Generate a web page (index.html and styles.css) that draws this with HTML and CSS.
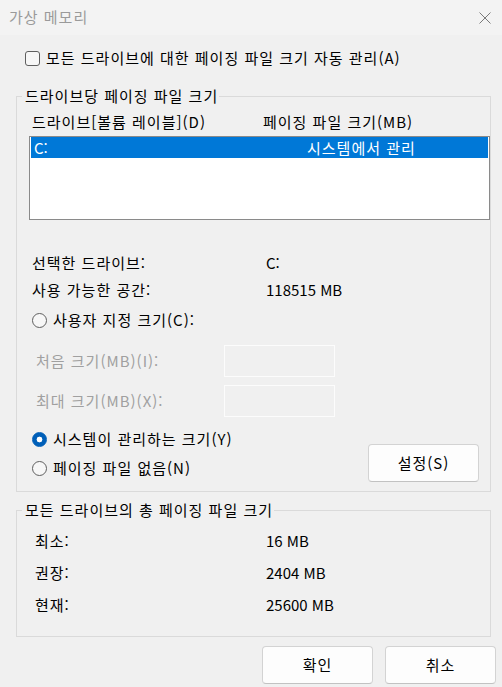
FILE: index.html
```html
<!DOCTYPE html>
<html lang="ko">
<head>
<meta charset="utf-8">
<title>가상 메모리</title>
<link rel="stylesheet" href="styles.css">
</head>
<body>
<div class="window">
  <div class="titlebar">
    <span class="title">가상 메모리</span>
    <svg class="close" width="12" height="12" viewBox="0 0 12 12"><path d="M0.5 0.5 L11.5 11.5 M11.5 0.5 L0.5 11.5" stroke="#7a7a7a" stroke-width="1" fill="none"/></svg>
  </div>
  <div class="content">
    <div class="check-row"><span class="checkbox"></span><span>모든 드라이브에 대한 페이징 파일 크기 자동 관리(A)</span></div>

    <fieldset class="group group-drive">
      <legend>드라이브당 페이징 파일 크기</legend>
      <div class="cols">
        <span class="col-drive">드라이브[볼륨 레이블](D)</span>
        <span class="col-size">페이징 파일 크기(MB)</span>
      </div>
      <div class="listbox">
        <div class="list-row selected">
          <span class="row-drive num">C:</span>
          <span class="row-size">시스템에서 관리</span>
        </div>
      </div>
      <div class="info">
        <div class="info-row"><span class="info-label">선택한 드라이브:</span><span class="num">C:</span></div>
        <div class="info-row"><span class="info-label">사용 가능한 공간:</span><span class="num">118515 MB</span></div>
      </div>
      <div class="radio-row custom"><span class="radio"></span><span>사용자 지정 크기(C):</span></div>
      <div class="field-row first"><span class="field-label">처음 크기(MB)(I):</span><span class="edit"></span></div>
      <div class="field-row"><span class="field-label">최대 크기(MB)(X):</span><span class="edit"></span></div>
      <div class="choice-area">
        <div class="choice-col">
          <div class="radio-row"><span class="radio on"></span><span>시스템이 관리하는 크기(Y)</span></div>
          <div class="radio-row none"><span class="radio"></span><span>페이징 파일 없음(N)</span></div>
        </div>
        <button class="btn set-btn">설정(S)</button>
      </div>
    </fieldset>

    <fieldset class="group group-total">
      <legend>모든 드라이브의 총 페이징 파일 크기</legend>
      <div class="totals">
        <div class="total-row"><span class="total-label">최소:</span><span class="num">16 MB</span></div>
        <div class="total-row"><span class="total-label">권장:</span><span class="num">2404 MB</span></div>
        <div class="total-row"><span class="total-label">현재:</span><span class="num">25600 MB</span></div>
      </div>
    </fieldset>

    <div class="actions">
      <button class="btn">확인</button>
      <button class="btn">취소</button>
    </div>
  </div>
</div>
</body>
</html>
```

FILE: styles.css
```css
* { box-sizing: border-box; }
html, body { margin: 0; padding: 0; }
body {
  width: 502px;
  height: 687px;
  overflow: hidden;
  background: #f0f0f0;
  font-family: "Noto Sans CJK KR", "Malgun Gothic", sans-serif;
  font-size: 15px;
  line-height: 20px;
  letter-spacing: 1px;
  color: #000;
}
.num { letter-spacing: 0; }
.window { width: 502px; height: 687px; }

.titlebar {
  height: 35px;
  background: #f3f3f3;
  display: flex;
  align-items: center;
  justify-content: space-between;
  padding: 0 11px 0 9px;
}
.title { color: #9a9a9a; margin-top: -2px; }
.close { display: block; }

.content { padding: 13px 0 0 16px; }

.check-row {
  display: flex;
  align-items: center;
  gap: 6px;
  height: 20px;
  margin-left: 9px;
}
.checkbox {
  width: 15px;
  height: 15px;
  border: 1px solid #5f5f5f;
  border-radius: 3px;
  background: #f7f7f7;
}

.group {
  margin: 18px 0 0 0;
  width: 475px;
  min-width: 0;
  padding: 0;
  border: 1px solid #dadada;
}
.group legend {
  margin-left: 5px;
  padding: 0 1px 0 3px;
  height: 20px;
  line-height: 20px;
}

.cols {
  display: flex;
  height: 20px;
  margin: 6px 0 0 15px;
}
.col-drive { width: 231px; }

.listbox {
  margin: 4px 0 0 12px;
  width: 461px;
  height: 84px;
  border: 1px solid #8a8a8a;
  background: #fff;
  padding: 0 1px;
}
.list-row {
  display: flex;
  height: 21px;
  line-height: 21px;
  padding-left: 3px;
}
.list-row.selected { background: #0078d7; color: #fff; }
.row-drive { width: 273px; }

.info { margin: 33px 0 0 15px; }
.info-row { display: flex; height: 27px; }
.info-label { width: 234px; }

.radio-row {
  display: flex;
  align-items: center;
  gap: 6px;
  height: 20px;
}
.radio-row.custom { margin: 3px 0 0 15px; }
.radio {
  width: 15px;
  height: 15px;
  border-radius: 50%;
  border: 1px solid #5f5f5f;
  background: #f7f7f7;
}
.radio.on {
  border-color: #005fb8;
  background: radial-gradient(circle, #fff 0 2.6px, #005fb8 3.2px);
}

.field-row {
  display: flex;
  align-items: center;
  margin: 8px 0 0 19px;
  height: 32px;
  color: #a0a0a0;
}
.field-row.first { margin-top: 15px; }
.field-label { width: 188px; }
.edit {
  width: 111px;
  height: 32px;
  border: 1px solid #fcfcfc;
  background: #f0f0f0;
}

.choice-area {
  display: flex;
  justify-content: space-between;
  align-items: flex-end;
  margin: 12px 11px 9px 15px;
}
.choice-col { padding-bottom: 4px; }
.radio-row.none { margin-top: 9px; }

.btn {
  width: 111px;
  height: 38px;
  border: 1px solid #d3d3d3;
  border-bottom-color: #c2c2c2;
  border-radius: 4px;
  background: #fdfdfd;
  font-family: inherit;
  font-size: 15px;
  line-height: 20px;
  letter-spacing: 1px;
  color: #000;
  padding: 0;
}

.group-total { margin-top: 8px; }
.totals {
  display: flex;
  flex-direction: column;
  gap: 12px;
  margin: 11px 0 0 18px;
  padding-bottom: 21px;
}
.total-row { display: flex; height: 20px; }
.total-label { width: 231px; }

.actions {
  display: flex;
  justify-content: flex-end;
  gap: 12px;
  margin-top: 9px;
  padding-right: 6px;
}
```
